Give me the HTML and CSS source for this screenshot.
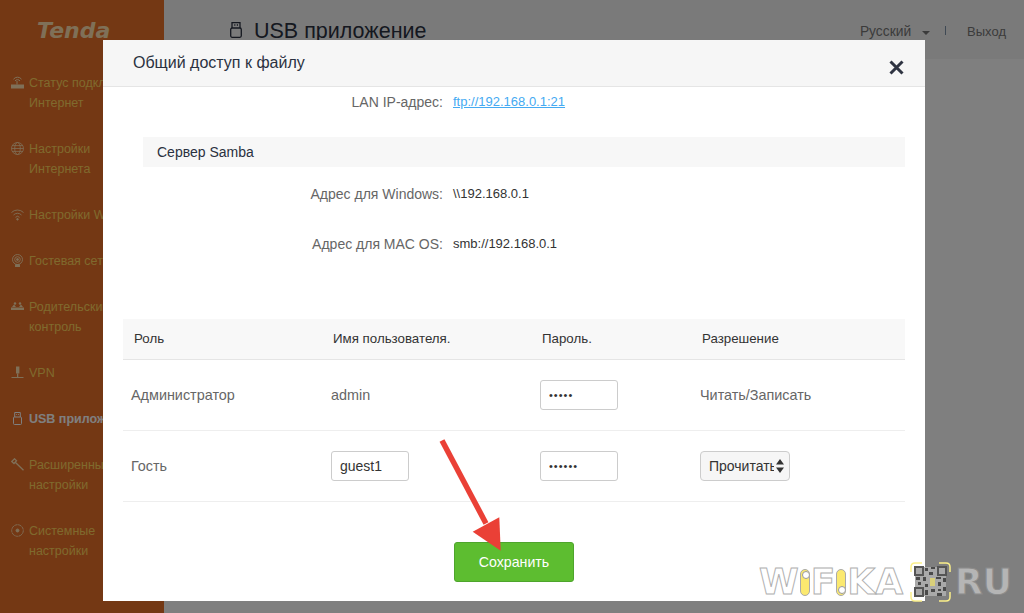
FILE: index.html
```html
<!DOCTYPE html>
<html lang="ru">
<head>
  <meta charset="UTF-8">
  <title>USB приложение</title>
  <link rel="stylesheet" href="styles.css">
</head>
<body>
  <aside class="sidebar">
    <div class="logo">Tenda</div>
    <ul class="menu">
      <li><svg viewBox="0 0 13 13"><path d="M0 8.500h13v4H0z" fill="currentColor"/><path d="M6 8.500V5M4 5a3 3 0 0 1 5 0M2.500 3.200a5 5 0 0 1 8 0" fill="none" stroke="currentColor"/></svg><span>Статус подключения<br>Интернет</span></li>
      <li><svg viewBox="0 0 13 13" fill="none" stroke="currentColor" stroke-width=".8"><circle cx="6.500" cy="6.500" r="6"/><ellipse cx="6.500" cy="6.500" rx="2.800" ry="6"/><path d="M.5 6.500h12M1.300 3.600h10.400M1.300 9.400h10.400"/></svg><span>Настройки<br>Интернета</span></li>
      <li class="one"><svg viewBox="0 0 13 13" fill="none" stroke="currentColor" stroke-width=".9"><path d="M.5 4.500a8.500 8.500 0 0 1 12 0M2.500 7a5.500 5.500 0 0 1 8 0M4.500 9.300a2.800 2.800 0 0 1 4 0"/><circle cx="6.500" cy="11.300" r=".8" fill="currentColor"/></svg><span>Настройки WiFi</span></li>
      <li class="one"><svg viewBox="0 0 13 13" fill="none" stroke="currentColor" stroke-width=".9"><circle cx="6.500" cy="5.500" r="5"/><circle cx="6.500" cy="5.500" r="2.800"/><circle cx="6.500" cy="5.500" r="1" fill="currentColor"/><path d="M4.500 10.500h4V13h-4z" fill="currentColor"/></svg><span>Гостевая сеть</span></li>
      <li><svg viewBox="0 0 13 13" fill="currentColor"><path d="M0 10V7.500h13V10z"/><path d="M1 7l2-2.500L5 7zM8 7l2-2.500L12 7z"/><circle cx="4" cy="3.500" r="1.200"/><circle cx="9" cy="3.500" r="1.200"/></svg><span>Родительский<br>контроль</span></li>
      <li class="one"><svg viewBox="0 0 13 13" fill="currentColor"><path d="M5 .5h3.400v7H5z"/><path d="M6 7.500h1.300v4H6zM.5 11h12v1H.5z"/></svg><span>VPN</span></li>
      <li class="one active"><svg viewBox="0 0 13 13" fill="none" stroke="currentColor"><rect x="2.500" y="5" width="8" height="7.500" rx="1"/><path d="M3.700 5V.5h5.600V5M5.300 2.500h.8M7 2.500h.8"/></svg><span>USB приложение</span></li>
      <li><svg viewBox="0 0 13 13" fill="none" stroke="currentColor" stroke-width="1.300"><path d="M.8 3.500L3.500.8l2 2L3 5.500zM4.500 4.500l8 7.800"/></svg><span>Расширенные<br>настройки</span></li>
      <li><svg viewBox="0 0 13 13" fill="none" stroke="currentColor" stroke-width=".9"><circle cx="6.500" cy="6.500" r="5.800" stroke-dasharray="3.400 .5"/><circle cx="6.500" cy="6.500" r="1.500" fill="currentColor"/></svg><span>Системные<br>настройки</span></li>
    </ul>
  </aside>

  <main class="page">
    <header class="topbar">
      <h1><svg class="usb-icon" viewBox="0 0 12 16" fill="none" stroke="currentColor" stroke-width="1.300"><rect x=".7" y="6" width="10.600" height="9.300" rx="1.500"/><path d="M2 6V.7h8V6M4.200 3h1.200M6.800 3H8"/></svg>USB приложение</h1>
      <div class="top-links">
        <span class="lang">Русский</span><i class="caret"></i><i class="sep"></i><span>Выход</span>
      </div>
    </header>
  </main>

  <div class="backdrop"></div>

  <section class="modal">
    <div class="modal-head">
      <h2>Общий доступ к файлу</h2>
      <svg class="close" viewBox="0 0 15 15"><path d="M1.500 1.500l12 12M13.500 1.500l-12 12" stroke="#2f3442" stroke-width="3" fill="none"/></svg>
    </div>
    <div class="modal-body">
      <div class="field first"><label>LAN IP-адрес:</label><a href="#">ftp://192.168.0.1:21</a></div>
      <div class="section-title">Сервер Samba</div>
      <div class="field win"><label>Адрес для Windows:</label><span>\\192.168.0.1</span></div>
      <div class="field mac"><label>Адрес для MAC OS:</label><span>smb://192.168.0.1</span></div>

      <table class="users">
        <thead>
          <tr><th>Роль</th><th>Имя пользователя.</th><th>Пароль.</th><th>Разрешение</th></tr>
        </thead>
        <tbody>
          <tr>
            <td>Администратор</td>
            <td>admin</td>
            <td><input class="text-input pass" type="password" value="admin"></td>
            <td>Читать/Записать</td>
          </tr>
          <tr>
            <td>Гость</td>
            <td><input class="text-input" type="text" value="guest1"></td>
            <td><input class="text-input pass" type="password" value="guest1"></td>
            <td><div class="select"><span class="select-text">Прочитать</span><svg viewBox="0 0 8 14" class="arrows"><path d="M4 0l4 5.500H0zM4 14l4-5.500H0z" fill="#333"/></svg></div></td>
          </tr>
        </tbody>
      </table>

      <div class="actions"><button class="save">Сохранить</button></div>
    </div>
  </section>

  <svg class="arrow" viewBox="0 0 1024 613"><path d="M442 440.500l44 83" stroke="#ea4036" stroke-width="5.500" fill="none"/><path d="M472.700 531.700l26.600-14.400 1.400 33.400z" fill="#ea4036"/></svg>

  <div class="watermark">
    <span class="wm-letter">W</span><span class="wm-i top">I</span><span class="wm-letter">F</span><span class="wm-i bottom">I</span><span class="wm-letter">KA</span>
    <svg class="wm-qr" viewBox="0 0 41 40">
      <path d="M1 10V5q0-4 4-4h7M29 1h7q4 0 4 4v5M40 30v5q0 4-4 4h-7M12 39H5q-4 0-4-4v-5" fill="none" stroke="#fbf08a" stroke-width="1.500"/>
      <rect x="5" y="5" width="31" height="29" fill="#a9a9a9"/>
      <path d="M5 5h8v8H5zM28 5h8v8h-8zM5 26h8v8H5z" fill="none" stroke="#555" stroke-width="2"/>
      <path d="M15 6h3v3h-3zM21 5h4v2h-4zM19 10h4v3h-4zM6 15h4v3H6zM13 15h3v4h-3zM26 15h5v2h-5zM33 16h3v4h-3zM8 20h3v3H8zM15 22h3v3h-3zM28 20h3v4h-3zM21 27h4v3h-4zM28 27h3v2h-3zM33 25h3v4h-3zM15 28h3v5h-3zM27 31h5v3h-5z" fill="#4a4a4a"/>
      <path d="M20 16h5v8h-5z" fill="#d9cf7a"/>
    </svg>
    <span class="wm-ru">RU</span>
  </div>
</body>
</html>
```

FILE: styles.css
```css
* { box-sizing: border-box; }
html, body { height: 100%; }
body {
  margin: 0;
  display: flex;
  height: 613px;
  overflow: hidden;
  font-family: "Liberation Sans", Arial, sans-serif;
  font-size: 13px;
  color: #555;
  background: #fff;
}
.sidebar {
  width: 164px;
  flex: none;
  background: #e97029;
  overflow: hidden;
}
.logo {
  height: 65px;
  padding: 19px 0 0 37px;
  font-family: "DejaVu Sans", sans-serif;
  font-style: italic;
  font-weight: bold;
  font-size: 22px;
  line-height: 24px;
  color: #ffe0b0;
}
.menu {
  list-style: none;
  margin: 0;
  padding: 8px 0 0 11px;
  width: 220px;
}
.menu li {
  display: flex;
  gap: 5px;
  height: 66px;
  color: #ffd45c;
  font-size: 12.5px;
  line-height: 20px;
}
.menu li.one { height: 46px; }
.menu li svg {
  width: 13px;
  height: 13px;
  flex: none;
  margin-top: 3px;
  color: #ffe0b0;
}
.menu li span { white-space: nowrap; }
.menu li.active span { color: #fff; font-weight: bold; }
.menu li.active svg { color: #fff; }
.page { flex: 1; background: #fff; }
.topbar {
  height: 59px;
  background: #f5f5f5;
  display: flex;
  justify-content: space-between;
  padding: 0 18px 0 66px;
}
.topbar h1 {
  margin: 19px 0 0;
  font-size: 21.5px;
  font-weight: normal;
  color: #2a3140;
  display: flex;
  align-items: flex-start;
  gap: 12px;
  line-height: 24px;
}
.usb-icon { width: 12px; height: 16px; margin-top: 3px; }
.top-links {
  display: flex;
  align-items: center;
  height: 63px;
  font-size: 13px;
  color: #777;
}
.lang { font-size: 13.8px; }
.caret {
  border: 4px solid transparent;
  border-top-color: #777;
  border-bottom: 0;
  margin: 2px 0 0 11px;
}
.sep { width: 1px; height: 9px; background: #7f93a8; margin: -3px 21px 0 15px; }
.backdrop {
  position: absolute;
  inset: 0;
  background: rgba(0, 0, 0, 0.5);
}
.modal {
  position: absolute;
  left: 103px;
  top: 40px;
  width: 822px;
  height: 561px;
  background: #fff;
  overflow: hidden;
}
.modal-head {
  height: 47px;
  background: #f6f6f6;
  border-bottom: 1px solid #e5e5e5;
  display: flex;
  justify-content: space-between;
  padding: 0 21px 0 30px;
}
.modal-head h2 {
  margin: 13px 0 0;
  font-size: 16px;
  font-weight: normal;
  line-height: 19px;
  color: #2a3140;
}
.close { width: 15px; height: 15px; margin-top: 20px; }
.modal-body { padding: 0 20px; }
.field {
  display: flex;
  gap: 10px;
  line-height: 16px;
  font-size: 13px;
  color: #333;
}
.field label { width: 320px; text-align: right; color: #666; font-size: 14px; }
.field a { color: #45aaf2; }
.field.first { padding-top: 7px; }
.field.win { margin-top: 19px; }
.field.mac { margin-top: 34px; }
.section-title {
  margin: 27px 0 0 20px;
  height: 30px;
  line-height: 30px;
  padding-left: 14px;
  background: #f7f7f7;
  color: #2a3140;
  font-size: 14px;
}
.users {
  width: 782px;
  margin-top: 67px;
  border-collapse: collapse;
  table-layout: fixed;
}
.users th {
  height: 40px;
  padding: 0 0 0 10px;
  background: #f8f8f8;
  border-bottom: 1px solid #e5e5e5;
  font-weight: normal;
  text-align: left;
  color: #333;
  font-size: 13.3px;
}
.users th:first-child { padding-left: 11px; }
.users th:nth-child(1), .users td:nth-child(1) { width: 200px; }
.users th:nth-child(2), .users td:nth-child(2) { width: 209px; }
.users th:nth-child(3), .users td:nth-child(3) { width: 160px; }
.users td {
  height: 71px;
  padding: 0 0 0 8px;
  border-bottom: 1px solid #eee;
  font-size: 14.4px;
  color: #666;
}
.text-input {
  width: 78px;
  height: 30px;
  padding: 0 8px;
  border: 1px solid #ccc;
  border-radius: 3px;
  font-family: inherit;
  font-size: 14px;
  color: #333;
  display: block;
}
.text-input.pass { font-size: 11px; letter-spacing: 1px; }
.select {
  width: 90px;
  height: 30px;
  border: 1px solid #ccc;
  border-radius: 4px;
  background: #f6f6f6;
  display: flex;
  align-items: center;
  padding-left: 8px;
  gap: 2px;
  color: #333;
  font-size: 14px;
}
.select-text { width: 65px; overflow: hidden; white-space: nowrap; }
.arrows { width: 8px; height: 14px; flex: none; }
.actions { display: flex; justify-content: center; padding: 40px 0 0; }
.save {
  width: 120px;
  height: 40px;
  border: 1px solid #4ea52c;
  border-radius: 3px;
  background: #5dbd30;
  color: #fff;
  font-family: inherit;
  font-size: 14.2px;
}
.arrow { position: absolute; left: 0; top: 0; width: 1024px; height: 613px; }
.watermark {
  position: absolute;
  left: 759px;
  top: 562px;
  display: flex;
  align-items: center;
  font-family: "DejaVu Sans", sans-serif;
  font-size: 36px;
  line-height: 40px;
  font-weight: bold;
}
.wm-letter {
  color: rgba(255, 255, 255, 0.85);
  -webkit-text-stroke: 1px #b0b0b0;
}
.wm-i {
  position: relative;
  width: 10px;
  height: 27px;
  margin: 0 1px;
  border: 1px solid #aaa;
  border-radius: 5px;
  background: #fbe96f;
  color: transparent;
  font-size: 10px;
  line-height: 24px;
  overflow: hidden;
}
.wm-i::after {
  content: "";
  position: absolute;
  left: 1px;
  width: 6px;
  height: 6px;
  border-radius: 50%;
  background: #fff;
  border: 1px solid #999;
}
.wm-i.top::after { top: 1px; }
.wm-i.bottom::after { bottom: 1px; }
.wm-qr { width: 41px; height: 40px; margin-left: 7px; flex: none; }
.wm-ru {
  margin-left: 4px;
  color: #b5b5b5;
  -webkit-text-stroke: 1px #8c8c8c;
  white-space: nowrap;
}
```
